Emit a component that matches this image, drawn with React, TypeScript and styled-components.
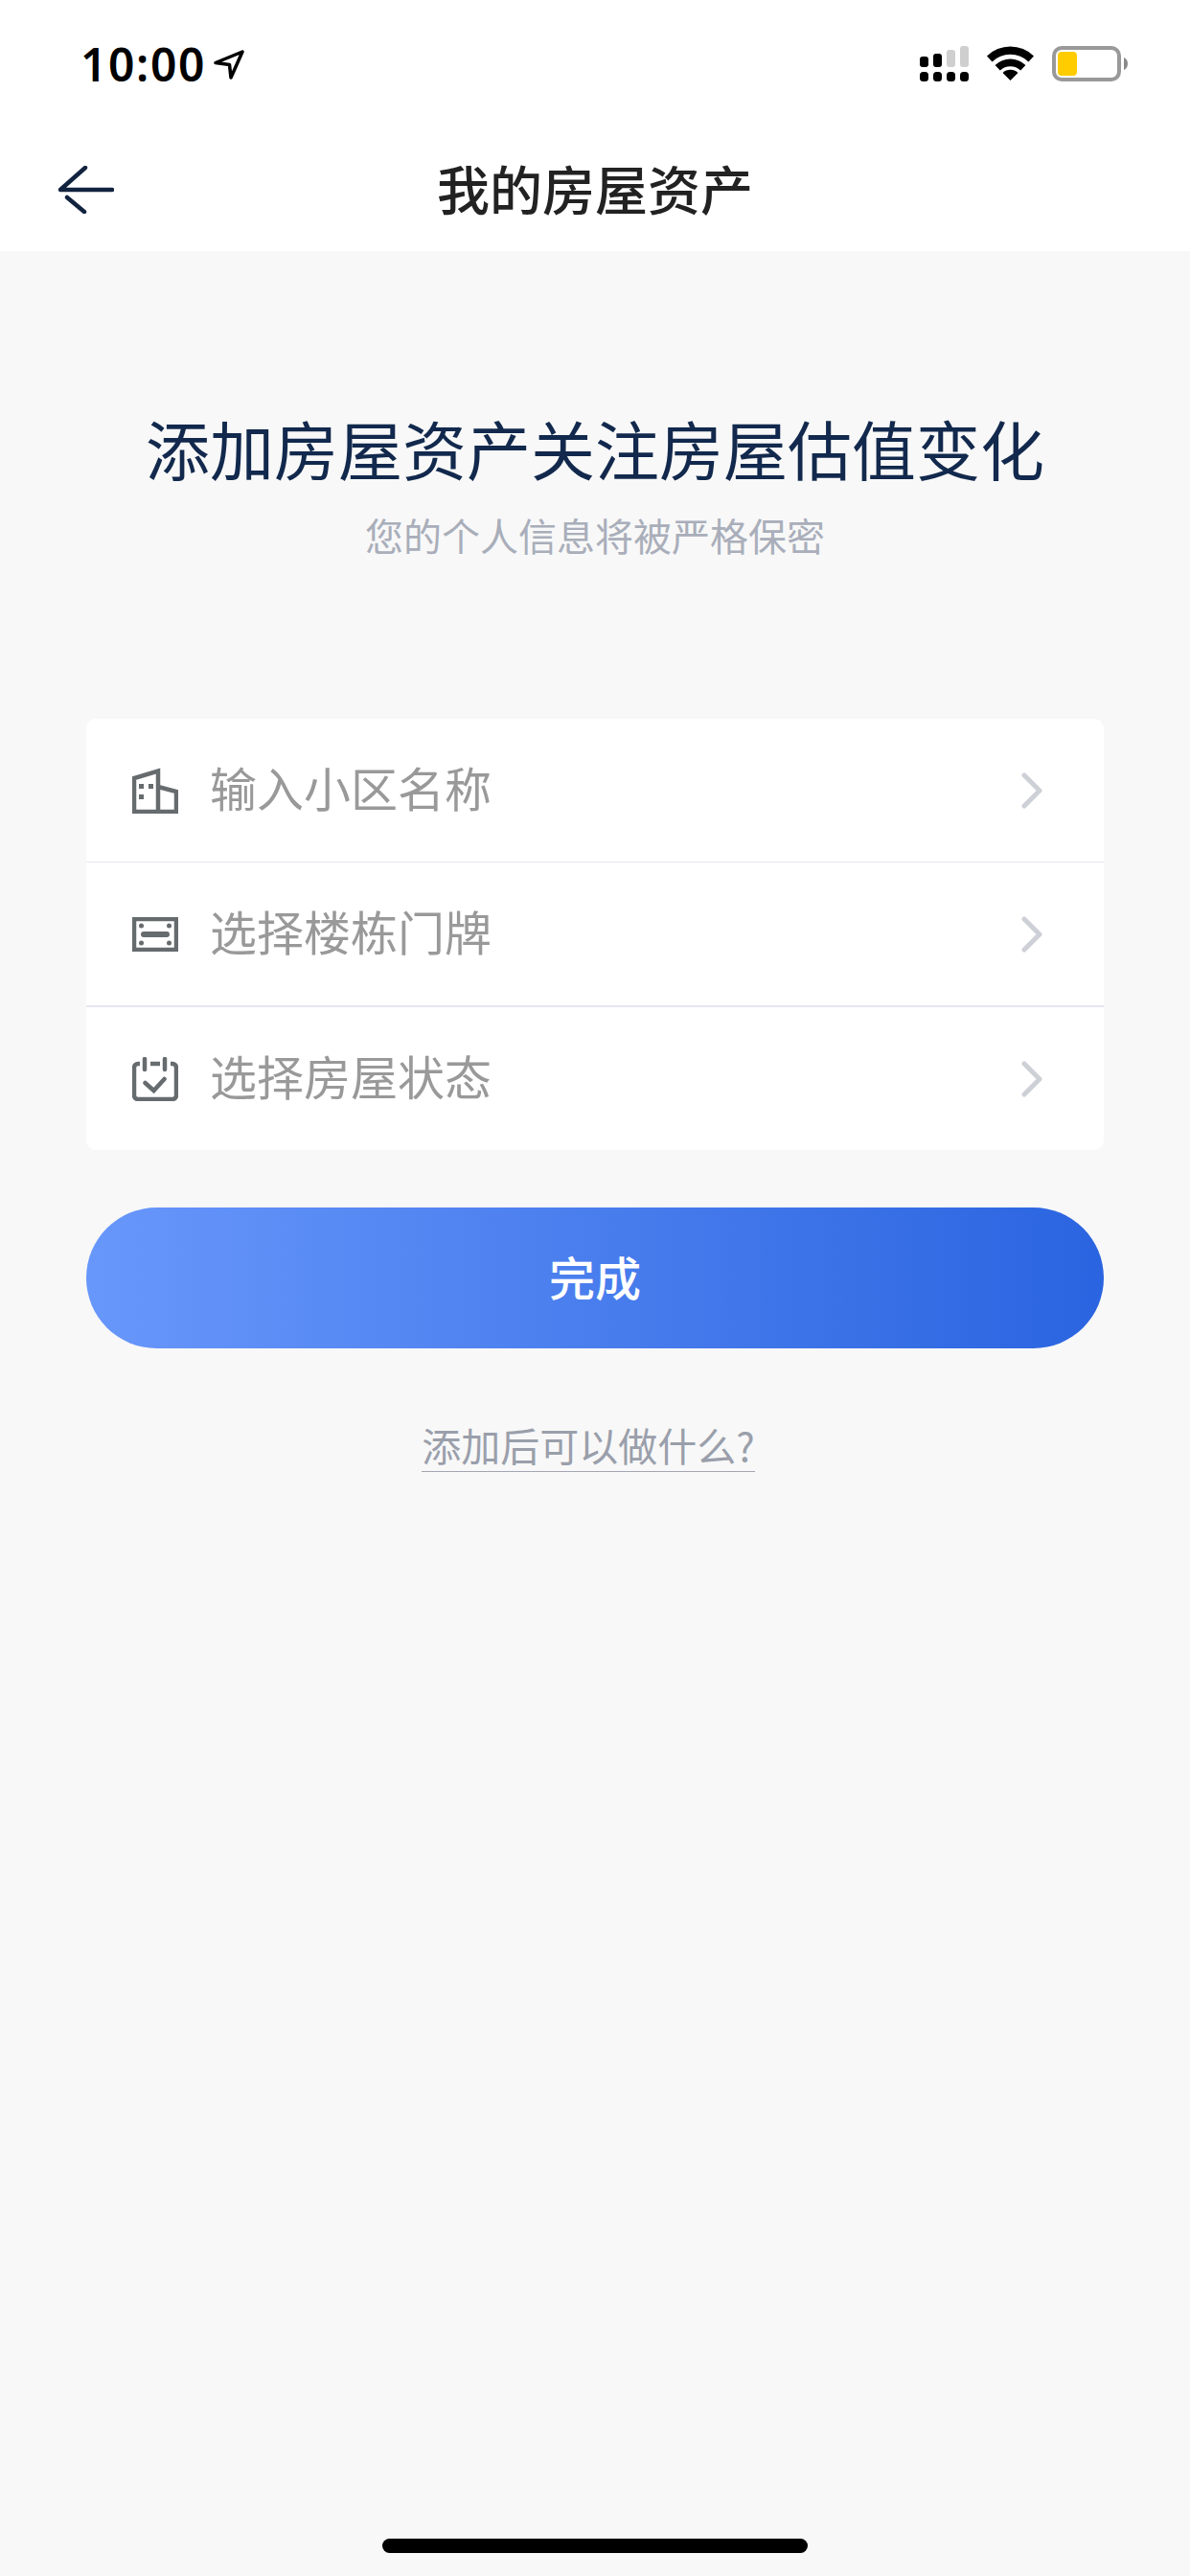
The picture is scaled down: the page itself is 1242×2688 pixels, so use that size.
import styled, { createGlobalStyle } from "styled-components";

const GlobalStyle = createGlobalStyle`
  html, body {
    margin: 0;
    padding: 0;
    background: #f8f8f8;
  }
  * {
    box-sizing: border-box;
  }
`;

const cjk = `"Noto Sans CJK SC", "Noto Sans", sans-serif`;

const Page = styled.div`
  width: 1242px;
  height: 2688px;
  display: flex;
  flex-direction: column;
  overflow: hidden;
  background: #f8f8f8;
  font-family: ${cjk};
`;

const StatusBar = styled.div`
  height: 130px;
  background: #fff;
  display: flex;
  justify-content: space-between;
  align-items: flex-start;
  padding: 48px 65px 0 84px;
`;

const TimeGroup = styled.div`
  display: flex;
  align-items: center;
  gap: 8px;
`;

const Time = styled.span`
  font-family: "Noto Sans", sans-serif;
  font-size: 48px;
  font-weight: 600;
  line-height: 38px;
  letter-spacing: 1.6px;
  color: #000;
`;

const StatusIcons = styled.div`
  display: flex;
  align-items: flex-start;
  gap: 19px;
`;

const NavBar = styled.div`
  height: 132px;
  background: #fff;
  display: grid;
  grid-template-columns: 1fr auto 1fr;
  align-items: center;
  padding: 4px 61px 0;
`;

const NavTitle = styled.div`
  padding-bottom: 6px;
  font-size: 55px;
  font-weight: 500;
  color: #222;
  line-height: 76px;
`;

const Body = styled.div`
  flex: 1;
  display: flex;
  flex-direction: column;
  align-items: center;
  padding: 165px 90px 24px;
`;

const Headline = styled.div`
  font-size: 67px;
  font-weight: 400;
  line-height: 80px;
  color: #12294d;
`;

const Subhead = styled.div`
  margin-top: 23px;
  font-size: 40px;
  line-height: 56px;
  color: #a9aeba;
`;

const Card = styled.div`
  margin-top: 164px;
  width: 100%;
  background: #fff;
  border-radius: 10px;
  overflow: hidden;
`;

const Row = styled.div<{ $rule: number }>`
  box-sizing: content-box;
  height: 149px;
  display: flex;
  align-items: center;
  gap: 33px;
  padding: 0 64px 0 48px;
  border-bottom: ${(p) => p.$rule}px solid #e6e6f2;
`;

const RowIcon = styled.div`
  width: 48px;
  height: 48px;
  display: flex;
  align-items: center;
  justify-content: center;
  flex-shrink: 0;
`;

const RowLabel = styled.div`
  flex: 1;
  padding-bottom: 8px;
  font-size: 49px;
  line-height: 66px;
  color: #999;
`;

const DoneButton = styled.button`
  margin-top: 60px;
  width: 100%;
  height: 147px;
  padding: 0 0 6px;
  border: 0;
  border-radius: 74px;
  background: linear-gradient(90deg, #6897fb 0%, #2a64e0 100%);
  color: #fff;
  font-family: ${cjk};
  font-size: 48px;
  font-weight: 500;
`;

const HelpLink = styled.div`
  margin: 73px 14px 0 0;
  font-size: 41px;
  line-height: 55px;
  color: #9a9fab;
  border-bottom: 1px solid #a4a7b3;
`;

const HomeIndicator = styled.div`
  margin-top: auto;
  width: 444px;
  height: 15px;
  border-radius: 8px;
  background: #000;
`;

const stroke = "#666b6e";

const BuildingIcon = () => (
  <svg width="48" height="48" viewBox="0 0 48 48" fill="none">
    <path
      d="M2 46V11L27 3.500V46M27 20L46 25V46M0 46H48"
      stroke={stroke}
      strokeWidth="4.500"
    />
    <path d="M7 17h5v5H7zM17 17h5v5h-5zM7 28h5v5H7z" fill={stroke} />
  </svg>
);

const PlateIcon = () => (
  <svg width="48" height="36" viewBox="0 0 48 36" fill="none">
    <rect x="2" y="2" width="44" height="32" stroke={stroke} strokeWidth="4.500" />
    <circle cx="9.500" cy="9" r="2.500" fill={stroke} />
    <circle cx="38.500" cy="9" r="2.500" fill={stroke} />
    <circle cx="9.500" cy="27" r="2.500" fill={stroke} />
    <circle cx="38.500" cy="27" r="2.500" fill={stroke} />
    <rect x="9" y="15" width="30" height="6" rx="3" fill={stroke} />
  </svg>
);

const CalendarIcon = () => (
  <svg width="48" height="46" viewBox="0 0 48 46" fill="none">
    <path
      d="M8 7H6a4 4 0 0 0-4 4v29a4 4 0 0 0 4 4h36a4 4 0 0 0 4-4V11a4 4 0 0 0-4-4h-2M19 7h10"
      stroke={stroke}
      strokeWidth="4.500"
    />
    <path
      d="M13 2v11M34 2v11M13.500 27l9 8 11-12"
      stroke={stroke}
      strokeWidth="4.500"
      strokeLinecap="round"
    />
  </svg>
);

const Chevron = () => (
  <svg width="22" height="38" viewBox="0 0 22 38" fill="none">
    <path
      d="M3 3l16 16L3 35"
      stroke="#cdd0d6"
      strokeWidth="5"
      strokeLinecap="round"
      strokeLinejoin="round"
    />
  </svg>
);

const BackArrow = () => (
  <svg width="58" height="50" viewBox="0 0 58 50" fill="none">
    <path
      d="M28 2L2 25H56M9 33L27 48"
      stroke="#12233f"
      strokeWidth="4.500"
      strokeLinecap="round"
      strokeLinejoin="round"
    />
  </svg>
);

const LocationArrow = () => (
  <svg width="32" height="31" viewBox="0 0 32 31" fill="none">
    <path
      d="M2 13.500L30 2L18 29L16.500 15.500Z"
      stroke="#000"
      strokeWidth="3.500"
      strokeLinejoin="round"
    />
  </svg>
);

const Signal = () => (
  <svg width="51" height="37" viewBox="0 0 51 37">
    <rect x="0" y="11" width="9" height="11" rx="3" fill="#000" />
    <rect x="14" y="8" width="9" height="14" rx="3" fill="#000" />
    <rect x="28" y="4" width="9" height="18" rx="3" fill="#cfcfcf" />
    <rect x="42" y="0" width="9" height="22" rx="3" fill="#cfcfcf" />
    <rect x="0" y="27" width="9" height="10" rx="3.500" fill="#000" />
    <rect x="14" y="27" width="9" height="10" rx="3.500" fill="#000" />
    <rect x="28" y="27" width="9" height="10" rx="3.500" fill="#000" />
    <rect x="42" y="27" width="9" height="10" rx="3.500" fill="#000" />
  </svg>
);

const Wifi = () => (
  <svg width="49" height="36" viewBox="0 0 49 36" fill="#000">
    <path d="M0 10.500A35 35 0 0 1 49 10.500L43.500 16.500A27 27 0 0 0 5.500 16.500Z" />
    <path d="M8.600 20A23 23 0 0 1 40.400 20L35.200 25.500A15.500 15.500 0 0 0 13.800 25.500Z" />
    <path d="M16.500 28A11.500 11.500 0 0 1 32.500 28L24.500 36Z" />
  </svg>
);

const Battery = () => (
  <svg width="79" height="37" viewBox="0 0 79 37" fill="none">
    <rect x="2" y="2" width="68" height="33" rx="8" stroke="#999" strokeWidth="4" />
    <rect x="6" y="6" width="20" height="25" rx="4" fill="#ffcc00" />
    <path d="M75 12c2.500 1 4 3.500 4 6.500s-1.500 5.500-4 6.500z" fill="#8a8a8a" />
  </svg>
);

const rows = [
  { label: "输入小区名称", icon: <BuildingIcon />, rule: 1 },
  { label: "选择楼栋门牌", icon: <PlateIcon />, rule: 2 },
  { label: "选择房屋状态", icon: <CalendarIcon />, rule: 0 },
];

function App() {
  return (
    <Page>
      <GlobalStyle />
      <StatusBar>
        <TimeGroup>
          <Time>10:00</Time>
          <LocationArrow />
        </TimeGroup>
        <StatusIcons>
          <Signal />
          <Wifi />
          <Battery />
        </StatusIcons>
      </StatusBar>
      <NavBar>
        <BackArrow />
        <NavTitle>我的房屋资产</NavTitle>
      </NavBar>
      <Body>
        <Headline>添加房屋资产关注房屋估值变化</Headline>
        <Subhead>您的个人信息将被严格保密</Subhead>
        <Card>
          {rows.map((row) => (
            <Row key={row.label} $rule={row.rule}>
              <RowIcon>{row.icon}</RowIcon>
              <RowLabel>{row.label}</RowLabel>
              <Chevron />
            </Row>
          ))}
        </Card>
        <DoneButton>完成</DoneButton>
        <HelpLink>添加后可以做什么?</HelpLink>
        <HomeIndicator />
      </Body>
    </Page>
  );
}

export default App;
